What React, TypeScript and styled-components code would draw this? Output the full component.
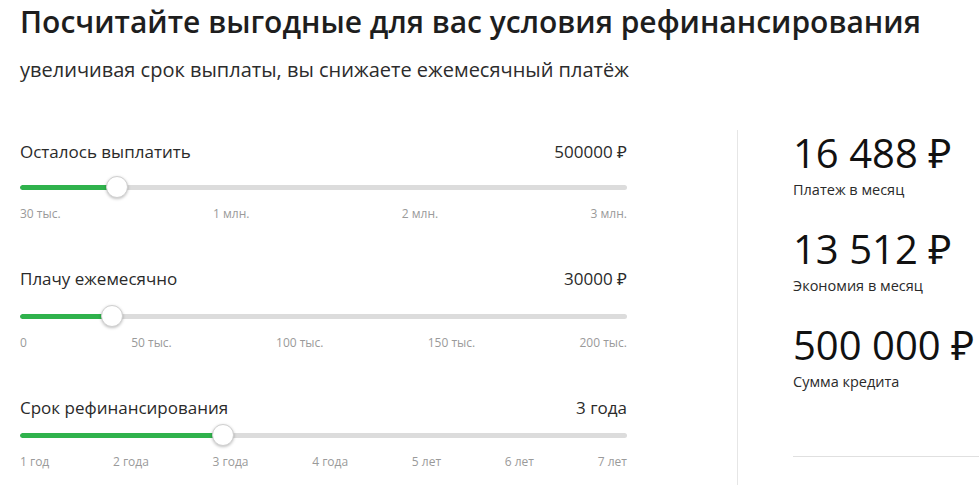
import React from 'react';
import styled, { createGlobalStyle } from 'styled-components';

const GlobalStyle = createGlobalStyle`
  html, body {
    margin: 0;
    padding: 0;
    background: #ffffff;
    overflow: hidden;
  }
  body {
    font-family: 'Open Sans', 'Noto Sans', sans-serif;
    color: #222222;
  }
`;

interface SliderData {
  label: string;
  value: string;
  percent: number;
  ticks: string[];
  labelGap: number;
}

const sliders: SliderData[] = [
  {
    label: 'Осталось выплатить',
    value: '500000 ₽',
    percent: 16,
    ticks: ['30 тыс.', '1 млн.', '2 млн.', '3 млн.'],
    labelGap: 12,
  },
  {
    label: 'Плачу ежемесячно',
    value: '30000 ₽',
    percent: 15.1,
    ticks: ['0', '50 тыс.', '100 тыс.', '150 тыс.', '200 тыс.'],
    labelGap: 14,
  },
  {
    label: 'Срок рефинансирования',
    value: '3 года',
    percent: 33.4,
    ticks: ['1 год', '2 года', '3 года', '4 года', '5 лет', '6 лет', '7 лет'],
    labelGap: 4,
  },
];

const results = [
  { amount: '16 488 ₽', caption: 'Платеж в месяц' },
  { amount: '13 512 ₽', caption: 'Экономия в месяц' },
  { amount: '500 000 ₽', caption: 'Сумма кредита' },
];

const Page = styled.div`
  width: 979px;
  height: 485px;
  padding-left: 20px;
  box-sizing: border-box;
  overflow: hidden;
`;

const Title = styled.h1`
  margin: 0;
  padding-top: 2px;
  font-size: 30px;
  line-height: 40px;
  font-weight: 600;
  color: #1e1e1e;
  white-space: nowrap;
`;

const Subtitle = styled.p`
  margin: 16px 0 0;
  font-size: 20px;
  line-height: 24px;
  color: #2c2c2c;
  white-space: nowrap;
`;

const Body = styled.div`
  display: flex;
  margin-top: 48px;
  height: 400px;
`;

const Controls = styled.div`
  flex: 0 0 607px;
  width: 607px;
  padding-top: 10px;
  display: flex;
  flex-direction: column;
  gap: 45px;
`;

const SliderBlock = styled.div`
  display: flex;
  flex-direction: column;
`;

const LabelRow = styled.div`
  display: flex;
  justify-content: space-between;
  font-size: 17px;
  line-height: 24px;
  color: #2a2a2a;
`;

const TrackArea = styled.div<{ $gap: number }>`
  position: relative;
  height: 22px;
  margin-top: ${(p) => p.$gap}px;
  display: flex;
  align-items: center;
`;

const Track = styled.div`
  width: 100%;
  height: 5px;
  border-radius: 3px;
  background: #dcdcdc;
  overflow: hidden;
`;

const Fill = styled.div`
  height: 100%;
  background: #2fb24c;
  border-radius: 3px;
`;

const Thumb = styled.div`
  position: absolute;
  top: 0;
  width: 22px;
  height: 22px;
  margin-left: -11px;
  border-radius: 50%;
  background: #ffffff;
  border: 1px solid #d0d0d0;
  box-sizing: border-box;
  box-shadow: 0 1px 3px rgba(0, 0, 0, 0.25);
`;

const Ticks = styled.div`
  display: flex;
  justify-content: space-between;
  margin-top: 8px;
  font-size: 12px;
  line-height: 16px;
  color: #9a9a9a;
`;

const Divider = styled.div`
  flex: 0 0 1px;
  background: #e6e6e6;
  margin-left: 110px;
`;

const Results = styled.div`
  margin-left: 55px;
  flex: 0 0 auto;
  padding-top: 1px;
  display: flex;
  flex-direction: column;
`;

const ResultItem = styled.div`
  display: flex;
  flex-direction: column;
  & + & {
    margin-top: 28px;
  }
`;

const Amount = styled.div`
  font-size: 40px;
  line-height: 44px;
  font-weight: 400;
  color: #111111;
  white-space: nowrap;
`;

const Caption = styled.div`
  margin-top: 6px;
  font-size: 14.5px;
  line-height: 18px;
  color: #2a2a2a;
  white-space: nowrap;
`;

const Rule = styled.div`
  margin-top: 65px;
  height: 1px;
  width: 240px;
  background: #e0e0e0;
`;

export default function App() {
  return (
    <Page>
      <GlobalStyle />
      <Title>Посчитайте выгодные для вас условия рефинансирования</Title>
      <Subtitle>увеличивая срок выплаты, вы снижаете ежемесячный платёж</Subtitle>
      <Body>
        <Controls>
          {sliders.map((s) => (
            <SliderBlock key={s.label}>
              <LabelRow>
                <span>{s.label}</span>
                <span>{s.value}</span>
              </LabelRow>
              <TrackArea $gap={s.labelGap}>
                <Track>
                  <Fill style={{ width: `${s.percent}%` }} />
                </Track>
                <Thumb style={{ left: `${s.percent}%` }} />
              </TrackArea>
              <Ticks>
                {s.ticks.map((t) => (
                  <span key={t}>{t}</span>
                ))}
              </Ticks>
            </SliderBlock>
          ))}
        </Controls>
        <Divider />
        <Results>
          {results.map((r) => (
            <ResultItem key={r.caption}>
              <Amount>{r.amount}</Amount>
              <Caption>{r.caption}</Caption>
            </ResultItem>
          ))}
          <Rule />
        </Results>
      </Body>
    </Page>
  );
}
